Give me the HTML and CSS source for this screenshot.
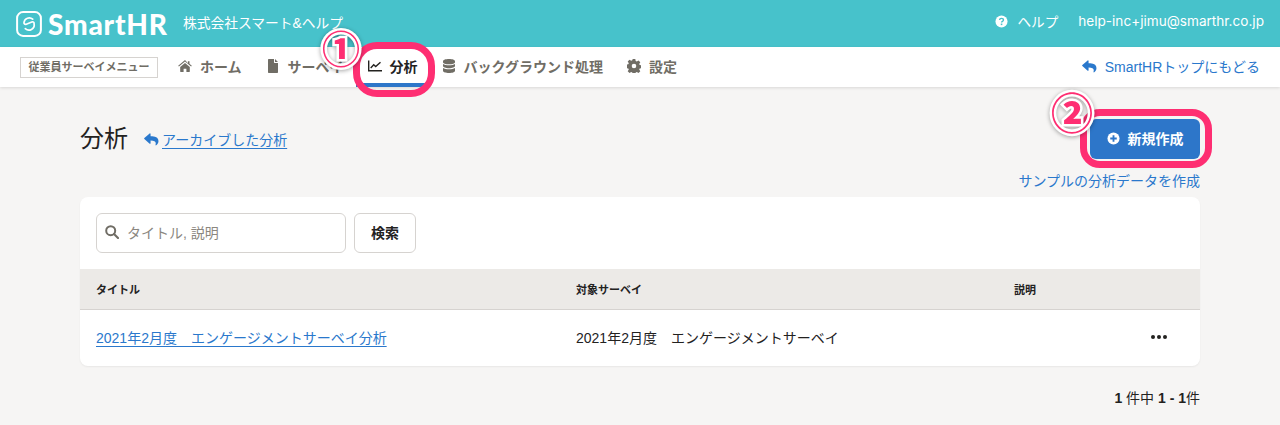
FILE: index.html
```html
<!DOCTYPE html>
<html lang="ja">
<head>
<meta charset="utf-8">
<title>分析</title>
<link rel="stylesheet" href="styles.css">
</head>
<body>
<svg class="defs" width="0" height="0" aria-hidden="true">
  <symbol id="reply" viewBox="0 0 16 14"><path d="M0.3 5.400 6 .5c.4-.3 1-.1 1 .5v2.600c4.700 0 8.500 1 8.500 5.300 0 1.800-1.100 3.500-2.400 4.400-.4.300-.9-.1-.8-.5 1-3.400-.7-4.600-5.300-4.700V11c0 .6-.6.800-1 .5L.3 6.400a.7.700 0 0 1 0-1Z" fill="currentColor"/></symbol>
</svg>
<header class="topbar">
  <div class="brand">
    <svg class="logo-mark" viewBox="0 0 26 26" aria-hidden="true"><rect x="1.100" y="1.100" width="23.800" height="23.800" rx="6" fill="none" stroke="#fff" stroke-width="2"/><path d="M16.700 8.200a5.300 5.300 0 0 0-8.700 3.200c-.2 1.500 1 2.300 2.300 1.800l5.500-2.200c1.400-.5 2.500.3 2.300 1.800a5.300 5.300 0 0 1-8.800 4.900" fill="none" stroke="#fff" stroke-width="1.700" stroke-linecap="round"/></svg>
    <span class="logo-text">SmartHR</span>
    <span class="company">株式会社スマート&amp;ヘルプ</span>
  </div>
  <div class="account">
    <span class="help">
      <svg class="ico-help" viewBox="0 0 14 14" aria-hidden="true"><circle cx="7" cy="7" r="6.500" fill="#fff"/><path d="M4.900 5.400c.1-1.200 1-1.800 2.100-1.800 1.200 0 2.100.7 2.100 1.800 0 1.500-2 1.500-2 2.700" fill="none" stroke="#47c2cb" stroke-width="1.500"/><rect x="6.200" y="9.200" width="1.700" height="1.700" fill="#47c2cb"/></svg>
      ヘルプ
    </span>
    <span class="email">help-inc+jimu@smarthr.co.jp</span>
  </div>
</header>

<nav class="subnav">
  <span class="menu-label">従業員サーベイメニュー</span>
  <ul class="tabs">
    <li class="tab">
      <svg class="tab-ico" viewBox="0 0 14 12" aria-hidden="true"><path d="M7 0 .2 5.700l.7.800L7 1.500l6.100 5 .7-.8-2.300-1.900V1.200H9.900v2.100ZM2.200 7v4.600c0 .2.200.4.400.4h3V8.800h2.800V12h3c.2 0 .4-.2.400-.4V7L7 3Z" fill="currentColor"/></svg>
      ホーム
    </li>
    <li class="tab">
      <svg class="tab-ico" viewBox="0 0 10 14" aria-hidden="true"><path d="M0 .7C0 .3.300 0 .7 0H6v3.500c0 .3.200.5.500.5H10v9.300c0 .4-.3.700-.7.700H.7c-.4 0-.7-.3-.7-.7ZM7 0l3 3H7Z" fill="currentColor"/></svg>
      サーベイ
    </li>
    <li class="tab active">
      <svg class="tab-ico" viewBox="0 0 14 11" aria-hidden="true"><path d="M.7 0v10.300H14M2.700 7.500l3-3.200 2 1.800L12.500 1.800" fill="none" stroke="currentColor" stroke-width="1.400"/></svg>
      分析
      <span class="ring ring-tab"></span>
    </li>
    <li class="tab">
      <svg class="tab-ico" viewBox="0 0 12 14" aria-hidden="true"><path d="M6 0c3.300 0 6 .9 6 2.200v1c0 1.200-2.700 2.100-6 2.100S0 4.400 0 3.200v-1C0 .9 2.700 0 6 0ZM0 5c1.300.9 3.600 1.300 6 1.300S10.700 5.900 12 5v2c0 1.200-2.700 2.200-6 2.200S0 8.200 0 7Zm0 4c1.300.9 3.600 1.300 6 1.300s4.700-.4 6-1.300v2.700c0 1.300-2.700 2.300-6 2.300s-6-1-6-2.300Z" fill="currentColor"/></svg>
      バックグラウンド処理
    </li>
    <li class="tab">
      <svg class="tab-ico" viewBox="0 0 14 14" aria-hidden="true"><path fill-rule="evenodd" d="M5.700 0h2.600l.4 2 1.100.5 1.700-1.100 1.800 1.800-1.100 1.700.5 1.100 2 .4v2.600l-2 .4-.5 1.100 1.100 1.700-1.800 1.800-1.700-1.100-1.100.5-.4 2H5.700l-.4-2-1.100-.5-1.700 1.100-1.800-1.800 1.100-1.700-.5-1.100-2-.4V5.700l2-.4.500-1.100-1.100-1.700 1.800-1.800 1.700 1.100 1.100-.5ZM7 4.700a2.300 2.300 0 1 0 0 4.600 2.300 2.300 0 0 0 0-4.600Z" fill="currentColor"/></svg>
      設定
    </li>
  </ul>
  <a class="back-link" href="#"><svg class="reply" aria-hidden="true"><use href="#reply"/></svg>SmartHRトップにもどる</a>
</nav>

<main class="page">
  <div class="page-head">
    <div class="title-group">
      <h1 class="title">分析</h1>
      <svg class="reply" aria-hidden="true"><use href="#reply"/></svg>
      <a class="archive-link" href="#">アーカイブした分析</a>
    </div>
    <div class="actions">
      <button class="primary" type="button">
        <svg class="plus" viewBox="0 0 14 14" aria-hidden="true"><circle cx="7" cy="7" r="6.500" fill="#fff"/><path d="M7 3.500v7M3.500 7h7" stroke="#2d76c9" stroke-width="2"/></svg>
        新規作成
        <span class="ring ring-btn"></span>
      </button>
      <a class="sample-link" href="#">サンプルの分析データを作成</a>
    </div>
  </div>

  <section class="card">
    <form class="search">
      <label class="field">
        <svg class="search-ico" viewBox="0 0 14 14" aria-hidden="true"><circle cx="5.700" cy="5.700" r="4.500" fill="none" stroke="currentColor" stroke-width="2"/><path d="m9 9 4 4" stroke="currentColor" stroke-width="2.200" stroke-linecap="round"/></svg>
        <span>タイトル, 説明</span>
      </label>
      <button class="secondary" type="button">検索</button>
    </form>
    <div class="thead">
      <span>タイトル</span>
      <span>対象サーベイ</span>
      <span>説明</span>
    </div>
    <div class="row">
      <span><a class="row-link" href="#">2021年2月度　エンゲージメントサーベイ分析</a></span>
      <span>2021年2月度　エンゲージメントサーベイ</span>
      <span class="row-menu"><i></i><i></i><i></i></span>
    </div>
  </section>

  <p class="pager"><b>1</b> 件中 <b>1 - 1</b>件</p>
</main>

<span class="badge badge-one">①</span>
<span class="badge badge-two">②</span>
</body>
</html>
```

FILE: styles.css
```css
* { box-sizing: border-box; }
html, body { height: 100%; }
body {
  margin: 0;
  overflow: hidden;
  background: #f6f5f4;
  color: #23221f;
  font-family: "Liberation Sans", "Noto Sans CJK JP", sans-serif;
  font-size: 14px;
}
a { color: #2a78cc; text-decoration: none; }
.defs { position: absolute; }

.topbar {
  height: 47px;
  background: #47c2cb;
  color: #fff;
  display: flex;
  align-items: center;
  justify-content: space-between;
  padding: 0 16px;
}
.brand { display: flex; align-items: center; }
.logo-mark { width: 26px; height: 26px; }
.logo-text {
  margin-left: 6px;
  width: 135px;
  font-family: Lato, sans-serif;
  font-weight: 900;
  font-size: 28px;
  line-height: 30px;
  letter-spacing: .8px;
}
.company { font-size: 13.750px; margin-top: -3px; }
.account {
  display: flex;
  align-items: center;
  font-family: Inter, "Noto Sans CJK JP", sans-serif;
  font-size: 13.600px;
  margin-top: -5px;
}
.help { display: flex; align-items: center; gap: 9px; margin-right: 20px; }
.ico-help { width: 13px; height: 13px; }

.subnav {
  height: 40px;
  background: #fff;
  box-shadow: 0 1px 3px rgba(0, 0, 0, .12);
  display: flex;
  align-items: center;
  padding: 0 20px;
  position: relative;
}
.menu-label {
  width: 138px;
  height: 21px;
  border: 1px solid #d6d3d0;
  color: #706d65;
  font-size: 11px;
  font-weight: 700;
  line-height: 18px;
  text-align: center;
  white-space: nowrap;
}
.tabs {
  display: flex;
  list-style: none;
  margin: 0 0 0 8px;
  padding: 0;
  height: 40px;
  flex: 1;
}
.tab {
  position: relative;
  display: flex;
  align-items: center;
  gap: 8px;
  padding: 0 12px 2px;
  color: #706d65;
  font-size: 14px;
  font-weight: 700;
  white-space: nowrap;
}
.tab-ico { width: 14px; height: 14px; flex: none; }
.tab.active { color: #23221f; box-shadow: inset 0 -4px #2d76c9; }
.back-link { display: flex; align-items: center; gap: 8px; font-size: 14px; padding-bottom: 2px; }
.reply { width: 15px; height: 13px; color: #2a78cc; flex: none; }

.ring {
  position: absolute;
  border: 7px solid #fe2e72;
  background: transparent;
  pointer-events: none;
}
.ring-tab { left: -3px; top: -5px; width: 82px; height: 55px; border-radius: 24px; }
.ring-btn { left: -10px; top: -10px; width: 132px; height: 59px; border-radius: 20px; }

.badge {
  position: absolute;
  color: #fe2e72;
  font-family: "Noto Sans CJK JP", sans-serif;
  font-weight: 900;
  text-align: center;
  -webkit-text-stroke: 5px #fff;
  paint-order: stroke fill;
  filter: drop-shadow(0 1px 2px rgba(0, 0, 0, .35));
}
.badge-one { left: 319px; top: 27px; width: 44px; height: 40px; font-size: 38px; line-height: 40px; }
.badge-two { left: 1050px; top: 90px; width: 44px; height: 42px; font-size: 42px; line-height: 42px; }

.page { padding: 0 80px; }
.page-head { display: flex; justify-content: space-between; align-items: flex-start; height: 110px; padding-top: 32px; }
.title-group { display: flex; align-items: center; margin-top: 4px; }
.title { margin: 0 16px 0 0; font-size: 24px; font-weight: 400; line-height: 32px; }
.archive-link { margin-left: 3px; font-size: 14px; text-decoration: underline; text-underline-offset: 3px; }
.actions { display: flex; flex-direction: column; align-items: flex-end; }
.primary {
  position: relative;
  width: 110px;
  height: 40px;
  border: 0;
  border-radius: 6px;
  background: #2d76c9;
  color: #fff;
  font: 700 14px "Noto Sans CJK JP", sans-serif;
  display: flex;
  align-items: center;
  justify-content: center;
  gap: 8px;
  padding: 0 0 2px;
}
.plus { width: 13px; height: 13px; }
.sample-link { margin-top: 12px; font-size: 14px; line-height: 20px; }

.card {
  background: #fff;
  border-radius: 8px;
  box-shadow: 0 1px 2px rgba(0, 0, 0, .06);
  height: 169px;
  overflow: hidden;
}
.search { display: flex; gap: 8px; padding: 16px; height: 72px; }
.field {
  width: 250px;
  height: 40px;
  border: 1px solid #d6d3d0;
  border-radius: 6px;
  display: flex;
  align-items: center;
  gap: 8px;
  padding: 0 0 2px 8px;
  color: #8b877f;
  font-size: 14px;
}
.search-ico { width: 14px; height: 14px; color: #706d65; }
.secondary {
  width: 62px;
  height: 40px;
  border: 1px solid #d6d3d0;
  border-radius: 6px;
  background: #fff;
  color: #23221f;
  font: 700 14px "Noto Sans CJK JP", sans-serif;
  padding: 0 0 3px;
}
.thead, .row { display: grid; grid-template-columns: 480px 438px 1fr; padding-left: 16px; align-items: center; }
.thead {
  height: 41px;
  background: #eceae7;
  border-bottom: 1px solid #d6d3d0;
  font-size: 11px;
  font-weight: 700;
  padding-bottom: 1px;
}
.row { height: 56px; font-size: 14px; padding-bottom: 2px; }
.row-link { text-decoration: underline; text-underline-offset: 3px; }
.row-menu { display: flex; justify-content: flex-end; gap: 2px; padding-right: 33px; }
.row-menu i { width: 4px; height: 4px; border-radius: 50%; background: #23221f; }
.pager { margin: 22px 0 0; text-align: right; font-size: 14px; line-height: 20px; }
```
